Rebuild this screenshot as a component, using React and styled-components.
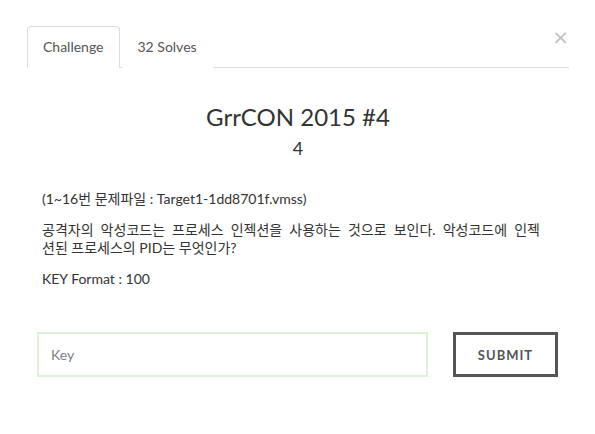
import React from 'react'
import styled, { createGlobalStyle } from 'styled-components'

const GlobalStyle = createGlobalStyle`
  body {
    margin: 0;
    background: #fff;
    font-family: Lato, "Noto Sans CJK KR", sans-serif;
    color: #333;
  }
`

const Modal = styled.div`
  position: relative;
  width: 595px;
  height: 434px;
  box-sizing: border-box;
  padding: 26px 26px 0 27px;
`

const CloseButton = styled.button`
  position: absolute;
  top: 27px;
  right: 26px;
  border: 0;
  background: none;
  padding: 0;
  font-family: "DejaVu Sans", sans-serif;
  font-size: 20px;
  line-height: 20px;
  color: #000;
  opacity: 0.25;
  cursor: pointer;
`

const TabBar = styled.ul`
  display: flex;
  list-style: none;
  margin: 0;
  padding: 0;
  border-bottom: 1px solid #ddd;
`

const Tab = styled.li`
  margin: 0 2px -1px 0;
  padding: 10px 15px;
  font-size: 14px;
  line-height: 20px;
  border: 1px solid ${p => (p.$active ? '#ddd' : 'transparent')};
  border-bottom-color: ${p => (p.$active ? '#fff' : 'transparent')};
  border-radius: 4px 4px 0 0;
  background: #fff;
  color: #555;
`

const Body = styled.div`
  padding: 0 15px;
`

const Title = styled.h3`
  margin: 36px 0 0;
  text-align: center;
  font-size: 24px;
  font-weight: 400;
  line-height: 1.1;
  color: #333;
`

const Points = styled.h4`
  margin: 9px 0 0;
  text-align: center;
  font-size: 18px;
  font-weight: 400;
  line-height: 1.1;
  color: #333;
`

const Description = styled.div`
  width: 498px;
  margin-top: 31px;
  font-size: 14px;
  line-height: 18px;
  color: #333;
`

const Paragraph = styled.p`
  margin: 0 0 13px;
`

// wrapped line of the description, stretched to the full width like the original
const FullLine = styled.span`
  display: block;
  text-align: justify;
  text-align-last: justify;
`

const Form = styled.form`
  display: flex;
  gap: 25px;
  margin: 44px -5px 0 -5px;
  padding-right: 1px;
`

const KeyInput = styled.input`
  flex: 1;
  height: 45px;
  box-sizing: border-box;
  border: 2px solid #dff0d8;
  padding: 0 12px;
  font-family: Lato, sans-serif;
  font-size: 14px;
  color: #555;
  outline: none;

  &::placeholder {
    color: #7a7f8c;
  }
`

const SubmitButton = styled.button`
  width: 105px;
  height: 45px;
  box-sizing: border-box;
  border: 3px solid #555;
  background: #fff;
  font-family: Lato, sans-serif;
  font-size: 13px;
  font-weight: 700;
  letter-spacing: 1px;
  color: #555;
  cursor: pointer;
`

export default function App() {
  return (
    <>
      <GlobalStyle />
      <Modal>
        <CloseButton type="button">×</CloseButton>
        <TabBar>
          <Tab $active>Challenge</Tab>
          <Tab>32 Solves</Tab>
        </TabBar>
        <Body>
          <Title>GrrCON 2015 #4</Title>
          <Points>4</Points>
          <Description>
            <Paragraph>(1~16번 문제파일 : Target1-1dd8701f.vmss)</Paragraph>
            <Paragraph>
              <FullLine>공격자의 악성코드는 프로세스 인젝션을 사용하는 것으로 보인다. 악성코드에 인젝</FullLine>
              션된 프로세스의 PID는 무엇인가?
            </Paragraph>
            <Paragraph>KEY Format : 100</Paragraph>
          </Description>
          <Form onSubmit={e => e.preventDefault()}>
            <KeyInput placeholder="Key" />
            <SubmitButton type="submit">SUBMIT</SubmitButton>
          </Form>
        </Body>
      </Modal>
    </>
  )
}
